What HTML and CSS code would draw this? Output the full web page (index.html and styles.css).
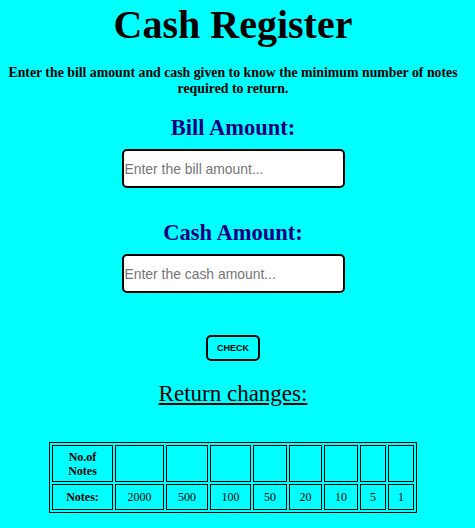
FILE: index.html
```html
<!DOCTYPE html>
<html>
<head>
<meta charset="utf-8">
<link rel="stylesheet" href="styles.css">
</head>
<body>
<div class="page">
  <h1 class="title">Cash Register</h1>
  <p class="intro">Enter the bill amount and cash given to know the minimum number of notes required to return.</p>
  <h2 class="label">Bill Amount:</h2>
  <input class="field" type="number" placeholder="Enter the bill amount...">
  <h2 class="label label-cash">Cash Amount:</h2>
  <input class="field" type="number" placeholder="Enter the cash amount...">
  <button class="check">CHECK</button>
  <h2 class="return">Return changes:</h2>
  <table class="notes">
    <tr class="row-count">
      <th>No.of<br>Notes</th>
      <td></td><td></td><td></td><td></td><td></td><td></td><td></td><td></td>
    </tr>
    <tr class="row-notes">
      <th>Notes:</th>
      <td>2000</td><td>500</td><td>100</td><td>50</td><td>20</td><td>10</td><td>5</td><td>1</td>
    </tr>
  </table>
</div>
</body>
</html>
```

FILE: styles.css
```css
html, body {
  margin: 0;
  background: #00ffff;
}
.page {
  padding: 0 17px 0 8px;
  display: flex;
  flex-direction: column;
  align-items: center;
  text-align: center;
  font-family: "Liberation Serif", serif;
  color: #000;
}
.title {
  margin: 2px 0 0;
  font-size: 40px;
  line-height: 46px;
  font-weight: bold;
}
.intro {
  margin: 17px -4px 0;
  font-size: 13.8px;
  line-height: 16px;
  font-weight: bold;
}
.label {
  margin: 18px 0 0;
  font-size: 22.5px;
  line-height: 26px;
  color: #000080;
  font-weight: bold;
}
.label-cash {
  margin-top: 32px;
}
.field {
  margin-top: 8px;
  box-sizing: border-box;
  width: 223px;
  height: 39px;
  border: 2px solid #000;
  border-radius: 5px;
  background: #fff;
  padding: 0 1px;
  font-family: "Liberation Sans", Arial, sans-serif;
  font-size: 13.9px;
  outline: none;
}
.field::placeholder {
  color: #757575;
}
.check {
  margin-top: 42px;
  box-sizing: border-box;
  width: 54px;
  height: 26px;
  border: 2px solid #000;
  border-radius: 5px;
  background: transparent;
  padding: 0;
  font-family: "Liberation Sans", Arial, sans-serif;
  font-size: 9px;
  font-weight: bold;
  color: #000;
}
.return {
  margin: 20px 0 0;
  font-size: 23px;
  line-height: 26px;
  font-weight: normal;
  text-decoration: underline;
}
.notes {
  margin-top: 35px;
  border: 1px solid #000;
  border-spacing: 2px;
  font-size: 12px;
}
.notes th, .notes td {
  border: 1px solid #000;
  padding: 0;
  line-height: 14px;
  vertical-align: middle;
}
.notes th {
  font-weight: bold;
}
.notes td {
  font-weight: normal;
}
.row-count th, .row-count td {
  height: 35px;
}
.row-notes th, .row-notes td {
  height: 24px;
}
.notes tr > :nth-child(1) { width: 59px; }
.notes tr > :nth-child(2) { width: 47px; }
.notes tr > :nth-child(3) { width: 40px; }
.notes tr > :nth-child(4) { width: 39px; }
.notes tr > :nth-child(5) { width: 32px; }
.notes tr > :nth-child(6) { width: 31px; }
.notes tr > :nth-child(7) { width: 32px; }
.notes tr > :nth-child(8) { width: 24px; }
.notes tr > :nth-child(9) { width: 24px; }
```
